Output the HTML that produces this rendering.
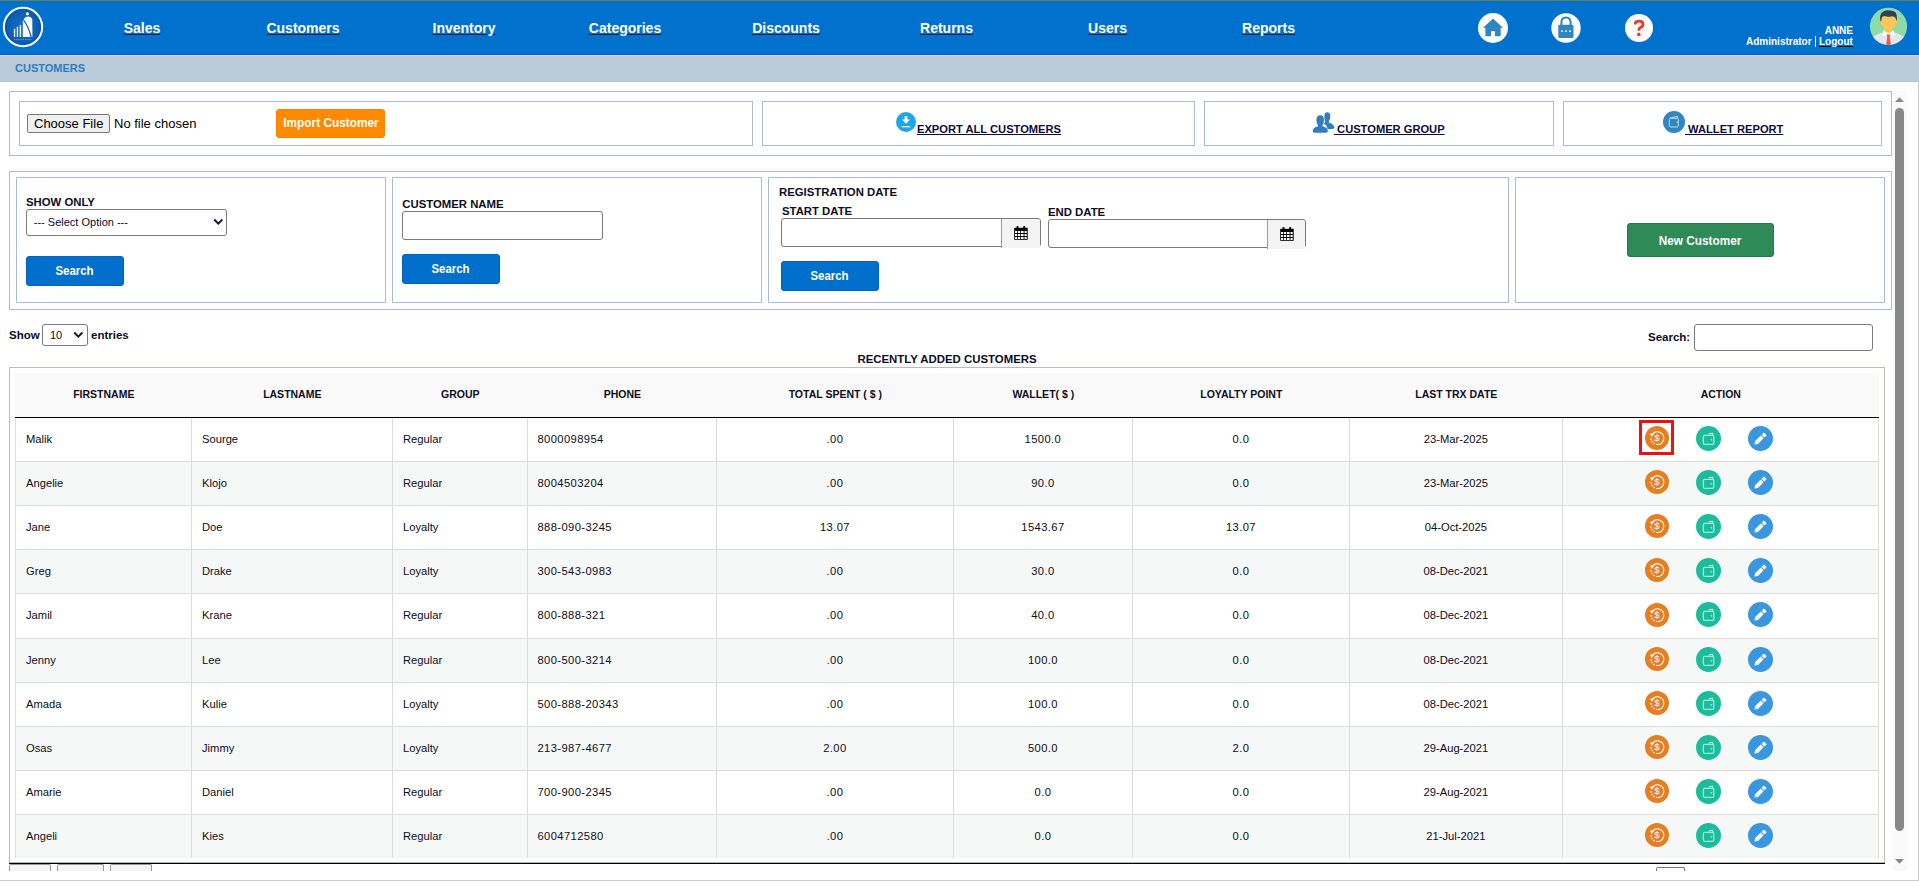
<!DOCTYPE html>
<html><head><meta charset="utf-8">
<style>
*{box-sizing:border-box;margin:0;padding:0}
html,body{width:1919px;height:886px;overflow:hidden;background:#fff;font-family:"Liberation Sans",sans-serif;position:relative}
.a{position:absolute}
.t{position:absolute;white-space:nowrap;line-height:1}
.b{font-weight:bold}
.nav{position:absolute;top:20px;font-size:14px;font-weight:bold;color:#fff;line-height:16px;text-decoration:underline;text-decoration-color:#1b1d3a;text-decoration-thickness:1px;text-underline-offset:1px;transform:translateX(-50%)}
.box{position:absolute;border:1px solid #aabcdc}
.lbl{position:absolute;white-space:nowrap;line-height:1;font-size:11.35px;font-weight:bold;color:#0d0d1f}
.btn{position:absolute;background:#0070cc;border:1px solid #0062c2;border-radius:3px;color:#fff;font-weight:bold;font-size:12.3px;text-align:center}
.btn span{display:inline-block;transform:scaleX(0.93)}
.inp{position:absolute;border:1px solid #7a7a7a;border-radius:3px;background:#fff}
</style></head><body>
<!-- top olive line -->
<div class="a" style="left:0;top:0;width:1919px;height:1px;background:#66804f"></div>
<!-- header -->
<div class="a" style="left:0;top:1px;width:1919px;height:54px;background:#0071cd"></div>
<div class="a" style="left:0;top:55px;width:1919px;height:27px;background:#bccbd9"></div>
<div class="a" style="left:0;top:55px;width:1919px;height:1px;background:#dcd9d6"></div>
<div class="a" style="left:0;top:54px;width:1919px;height:1px;background:#0260c4"></div>
<div class="a" style="left:0;top:81px;width:1919px;height:1px;background:#b3c3d2"></div>

<div class="nav" style="left:142px">Sales</div>
<div class="nav" style="left:303px">Customers</div>
<div class="nav" style="left:464px">Inventory</div>
<div class="nav" style="left:625px">Categories</div>
<div class="nav" style="left:786px">Discounts</div>
<div class="nav" style="left:946.5px">Returns</div>
<div class="nav" style="left:1107.5px">Users</div>
<div class="nav" style="left:1268.5px">Reports</div>


<!-- logo -->
<svg class="a" style="left:2px;top:6px" width="42" height="42" viewBox="0 0 42 42">
<defs><radialGradient id="lg" cx="0.5" cy="0.5" r="0.55"><stop offset="0" stop-color="#1272c9"/><stop offset="0.7" stop-color="#0b5eb2"/><stop offset="1" stop-color="#0a50a0"/></radialGradient></defs>
<circle cx="21" cy="21" r="19.2" fill="url(#lg)" stroke="#fff" stroke-width="2"/>
<circle cx="25.4" cy="7.8" r="1.6" fill="#fff"/>
<path d="M20.8 30.9 L20.8 15.6 L22.3 12.6 Q23.5 10.6 26 10.6 Q29.6 10.8 30.3 13.8 L30.4 30.9 Z" fill="#fff"/>
<path d="M21.6 14.2 Q26.5 20.5 29.3 31.5" fill="none" stroke="#0b5eb2" stroke-width="1.2"/>
<rect x="11.9" y="22.8" width="1.3" height="8.1" fill="#fff"/>
<rect x="14.8" y="20.8" width="1.3" height="10.1" fill="#fff"/>
<rect x="17.7" y="19" width="1.4" height="11.9" fill="#fff"/>
<line x1="12" y1="33.6" x2="30" y2="33.6" stroke="#6d9fd6" stroke-width="1" stroke-dasharray="1.2 1"/>
</svg>

<!-- header icons -->
<svg class="a" style="left:1478px;top:13px" width="30" height="30" viewBox="0 0 30 30">
<circle cx="15" cy="15" r="15" fill="#fff"/>
<path d="M15 5.5 L25 14.7 L22.7 14.7 L22.7 23.3 L17 23.3 L17 18 L13 18 L13 23.3 L7.4 23.3 L7.4 14.7 L5 14.7 Z" fill="#2f86c1"/>
</svg>
<svg class="a" style="left:1551px;top:13px" width="30" height="30" viewBox="0 0 30 30">
<circle cx="15" cy="15" r="14.7" fill="#fff"/>
<path d="M10.4 12.3 L10.4 9.6 Q10.4 4.4 15 4.4 Q19.6 4.4 19.6 9.6 L19.6 12.3" fill="none" stroke="#2f86c1" stroke-width="2"/>
<rect x="7.3" y="11.7" width="15.2" height="13.3" rx="1.6" fill="#2f86c1"/>
<rect x="10" y="17.4" width="1.6" height="1.6" fill="#fff"/>
<rect x="14.1" y="17.4" width="1.6" height="1.6" fill="#fff"/>
<rect x="18.2" y="17.4" width="1.6" height="1.6" fill="#fff"/>
</svg>
<svg class="a" style="left:1625px;top:14px" width="28" height="28" viewBox="0 0 28 28">
<circle cx="14" cy="14" r="14" fill="#fff"/>
<path d="M10.1 10.6 Q10.1 7.1 14.1 7.1 Q18 7.1 18 10.2 Q18 12.3 15.7 13.4 Q13.9 14.1 13.9 15.8 L13.9 16.8" fill="none" stroke="#e43d2b" stroke-width="2.8"/><rect x="12.2" y="18.8" width="3.3" height="3.3" rx="0.9" fill="#e43d2b"/>
</svg>

<div class="t b" style="right:66px;top:25.5px;font-size:10px;color:#fff">ANNE</div>
<div class="t b" style="left:1746px;top:36.5px;font-size:10px;color:#fff">Administrator</div>
<div class="a" style="left:1815px;top:36px;width:1px;height:11px;background:#fff"></div>
<div class="t b" style="left:1819px;top:36.5px;font-size:10px;color:#fff;text-decoration:underline;text-decoration-color:#111;text-underline-offset:1px">Logout</div>

<!-- avatar -->
<svg class="a" style="left:1866px;top:4px" width="46" height="46" viewBox="0 0 46 46">
<defs><clipPath id="avc"><circle cx="22.5" cy="22.3" r="18.6"/></clipPath></defs>
<circle cx="22.5" cy="22.3" r="18.6" fill="#8fdaa6"/>
<g clip-path="url(#avc)">
<path d="M3 46 L5 35 Q9 30.5 17.5 28.3 L27.5 28.3 Q36 30.5 40 35 L42 46 Z" fill="#e5e7ee"/>
<path d="M17 26.5 L17.3 32 L22.5 30.2 L27.7 32 L28 26.5 Z" fill="#ffffff"/>
<path d="M18.6 22 L18.6 27.3 Q22.5 30.5 26.4 27.3 L26.4 22 Z" fill="#f8c653"/>
<path d="M20.3 30.6 L24.7 30.6 L23.8 32.4 L25 42 L20 42 L21.2 32.4 Z" fill="#ef5b4c"/>
<ellipse cx="15.3" cy="17.4" rx="1.7" ry="2.2" fill="#fcc956"/>
<ellipse cx="29.7" cy="17.4" rx="1.7" ry="2.2" fill="#fcc956"/>
<path d="M15.2 12.5 L15.2 17.5 Q15.6 25.2 22.5 25.2 Q29.4 25.2 29.8 17.5 L29.8 12.5 Z" fill="#fcc956"/>
<path d="M14.4 17.2 Q13.2 10.5 16.5 8 Q19.3 5.8 23 6.5 Q27 5.9 29.6 8.6 Q31.6 11.5 30.5 17.4 L29.5 13.8 Q28 11.8 25.8 12.2 Q22.8 13.3 20 12.2 Q17.8 11.8 16.2 13 Q15.3 14.5 15.3 17.4 Z" fill="#2f4257"/>
</g>
</svg>

<div class="t b" style="left:15px;top:62.5px;font-size:11px;color:#2e7bc1">CUSTOMERS</div>

<!-- row 1 boxes -->
<div class="box" style="left:9px;top:91px;width:1883px;height:65px"></div>
<div class="box" style="left:19px;top:101px;width:734px;height:45px"></div>
<div class="box" style="left:762px;top:101px;width:433px;height:45px"></div>
<div class="box" style="left:1204px;top:101px;width:350px;height:45px"></div>
<div class="box" style="left:1563px;top:101px;width:319px;height:45px"></div>

<!-- row 2 boxes -->
<div class="box" style="left:9px;top:171px;width:1883px;height:139px"></div>
<div class="box" style="left:16px;top:177px;width:370px;height:126px"></div>
<div class="box" style="left:392px;top:177px;width:370px;height:126px"></div>
<div class="box" style="left:768px;top:177px;width:741px;height:126px"></div>
<div class="box" style="left:1515px;top:177px;width:370px;height:126px"></div>


<!-- row1 content -->
<div class="a" style="left:27px;top:114px;width:83px;height:19px;background:#efefef;border:1px solid #767676;border-radius:2px"></div>
<div class="t" style="left:34px;top:116.5px;font-size:13px;color:#000">Choose File</div>
<div class="t" style="left:114px;top:116.5px;font-size:13px;color:#000">No file chosen</div>
<div class="a" style="left:276px;top:109px;width:109px;height:29px;background:#ff8a00;border:1px solid #ff8000;border-radius:3px"></div>
<div class="t b" style="left:283.3px;top:117.8px;font-size:11.85px;color:#fff">Import Customer</div>

<svg class="a" style="left:896px;top:112px" width="20" height="20" viewBox="0 0 20 20">
<circle cx="10" cy="10" r="10" fill="#1ea7e8"/>
<path d="M8.6 4.3 L11.4 4.3 L11.4 7.6 L14 7.6 L10 11.8 L6 7.6 L8.6 7.6 Z" fill="#fff"/>
<rect x="5.8" y="14" width="8.4" height="1.3" fill="#fff"/>
</svg>
<div class="t b" style="left:917px;top:123.6px;font-size:11.15px;color:#0c0c3c;text-decoration:underline;text-underline-offset:1px">EXPORT ALL CUSTOMERS</div>

<svg class="a" style="left:1311px;top:110px" width="26" height="24" viewBox="0 0 26 24">
<g fill="#2f7fbf">
<path d="M16.3 2.2 Q19.3 2.2 19.3 6.5 Q19.3 9.5 17.8 11.5 L17.8 12.6 Q22.5 14 23.5 17.5 Q23 19 21 19 L16.5 19 Q15.5 14.5 12.6 13.6 L14.2 11.9 Q13.3 9.5 13.3 6.5 Q13.3 2.2 16.3 2.2 Z"/>
<path d="M9.2 5.2 Q13 5.2 13 10 Q13 13.3 11.4 15.5 L11.4 16.3 Q16.6 17.3 17 21.2 Q16.6 22.8 14 22.8 L4.5 22.8 Q1.7 22.8 1.6 21.2 Q2 17.3 7 16.3 L7 15.5 Q5.4 13.3 5.4 10 Q5.4 5.2 9.2 5.2 Z"/>
</g>
</svg>
<div class="t b" style="left:1334px;top:123.6px;font-size:11.15px;color:#0c0c3c;text-decoration:underline;text-underline-offset:1px">&nbsp;CUSTOMER GROUP</div>

<svg class="a" style="left:1663px;top:111px" width="22" height="22" viewBox="0 0 22 22">
<circle cx="11" cy="11" r="11" fill="#2f86c2"/>
<g fill="none" stroke="#c6dcee" stroke-width="1">
<rect x="6.3" y="7.3" width="9" height="8.7" rx="1.3"/>
<path d="M7.2 7 L14.3 5.3 L14.6 7"/>
</g>
<rect x="13.6" y="10.6" width="1.2" height="1.2" fill="#c6dcee"/>
</svg>
<div class="t b" style="left:1685px;top:123.6px;font-size:11.15px;color:#0c0c3c;text-decoration:underline;text-underline-offset:1px">&nbsp;WALLET REPORT</div>


<!-- row2 content -->
<div class="lbl" style="left:26px;top:197.1px">SHOW ONLY</div>
<div class="inp" style="left:26px;top:209px;width:201px;height:27px"></div>
<div class="t" style="left:33.8px;top:216.5px;font-size:11px;color:#0a0a30">--- Select Option ---</div>
<svg class="a" style="left:213px;top:218px" width="11" height="8" viewBox="0 0 11 8"><path d="M1.2 1.5 L5.3 5.6 L9.4 1.5" fill="none" stroke="#0b1a3f" stroke-width="2"/></svg>
<div class="btn" style="left:26px;top:256px;width:98px;height:30px;line-height:29px"><span>Search</span></div>

<div class="lbl" style="left:402.3px;top:199.1px">CUSTOMER NAME</div>
<div class="inp" style="left:402px;top:211px;width:201px;height:29px"></div>
<div class="btn" style="left:402px;top:254px;width:98px;height:30px;line-height:29px"><span>Search</span></div>

<div class="lbl" style="left:779px;top:186.8px">REGISTRATION DATE</div>
<div class="lbl" style="left:782px;top:205.8px">START DATE</div>
<div class="inp" style="left:781px;top:218px;width:260px;height:29px"></div>
<div class="a" style="left:1001px;top:219px;width:39px;height:29px;background:#f3f3f3;border-left:1px solid #9a9a9a;border-top-right-radius:3px"></div>
<svg class="a" style="left:1014px;top:226.2px" width="14" height="14" viewBox="0 0 14 14">
<rect x="0.2" y="1.8" width="13.5" height="12" fill="#000"/>
<rect x="2.5" y="0" width="2" height="3" rx="0.8" fill="#000"/><rect x="9.2" y="0" width="2" height="3" rx="0.8" fill="#000"/>
<g fill="#fff">
<rect x="1" y="5" width="2.2" height="2"/><rect x="4" y="5" width="2.2" height="2"/><rect x="7" y="5" width="2.6" height="2"/><rect x="10.5" y="5" width="2.2" height="2"/>
<rect x="1" y="8" width="2.2" height="2"/><rect x="4" y="8" width="2.2" height="2"/><rect x="7" y="8" width="2.6" height="2"/><rect x="10.5" y="8" width="2.2" height="2"/>
<rect x="1" y="11" width="2.2" height="2"/><rect x="4" y="11" width="2.2" height="2"/><rect x="7" y="11" width="2.6" height="2"/><rect x="10.5" y="11" width="2.2" height="2"/>
</g></svg>
<div class="lbl" style="left:1048px;top:207.1px">END DATE</div>
<div class="inp" style="left:1048px;top:219px;width:258px;height:29px"></div>
<div class="a" style="left:1267px;top:220px;width:38px;height:29px;background:#f3f3f3;border-left:1px solid #9a9a9a;border-top-right-radius:3px"></div>
<svg class="a" style="left:1280px;top:227.0px" width="14" height="14" viewBox="0 0 14 14">
<rect x="0.2" y="1.8" width="13.5" height="12" fill="#000"/>
<rect x="2.5" y="0" width="2" height="3" rx="0.8" fill="#000"/><rect x="9.2" y="0" width="2" height="3" rx="0.8" fill="#000"/>
<g fill="#fff">
<rect x="1" y="5" width="2.2" height="2"/><rect x="4" y="5" width="2.2" height="2"/><rect x="7" y="5" width="2.6" height="2"/><rect x="10.5" y="5" width="2.2" height="2"/>
<rect x="1" y="8" width="2.2" height="2"/><rect x="4" y="8" width="2.2" height="2"/><rect x="7" y="8" width="2.6" height="2"/><rect x="10.5" y="8" width="2.2" height="2"/>
<rect x="1" y="11" width="2.2" height="2"/><rect x="4" y="11" width="2.2" height="2"/><rect x="7" y="11" width="2.6" height="2"/><rect x="10.5" y="11" width="2.2" height="2"/>
</g></svg>
<div class="btn" style="left:781px;top:261px;width:98px;height:30px;line-height:29px"><span>Search</span></div>

<div class="btn" style="left:1627px;top:223px;width:147px;height:34px;line-height:35px;background:#2e8a56;border:1px solid #1f7d47;font-size:12.3px"><span style="transform:scaleX(0.96)">New Customer</span></div>

<svg width="0" height="0" style="position:absolute"><defs>
<g id="ic-ref"><circle cx="12" cy="12" r="12" fill="#e67e22"/>
<path d="M7.6 8.2 A6.3 6.3 0 1 1 11.2 18.3" fill="none" stroke="#fff" stroke-width="1.2"/>
<path d="M5.2 7.6 L9.4 7.4 L6.6 11 Z" fill="#fff"/>
<rect x="5.3" y="12.2" width="1.4" height="1.4" fill="#fff"/><rect x="6.4" y="14.8" width="1.4" height="1.4" fill="#fff"/><rect x="8.3" y="16.8" width="1.4" height="1.4" fill="#fff"/>
<text x="12" y="15.3" font-family="Liberation Sans" font-size="9.5" fill="#fff" text-anchor="middle">$</text>
</g>
<g id="ic-wal"><circle cx="12.5" cy="12.5" r="12.5" fill="#1bbc9b"/>
<rect x="7.4" y="9.4" width="10.4" height="9" rx="1.3" fill="none" stroke="#a6e6d6" stroke-width="1.3"/>
<path d="M12.6 7.9 L16.6 7.3 L17 9" fill="none" stroke="#a6e6d6" stroke-width="1.2"/>
<circle cx="15.4" cy="13.8" r="0.8" fill="#e8faf5"/>
</g>
<g id="ic-pen"><circle cx="12.5" cy="12.5" r="12.5" fill="#3a97dd"/>
<path d="M6.4 18.6 L7.2 15.1 L12.8 9.5 L15.6 12.3 L10 17.9 Z" fill="#fff"/>
<path d="M13.5 8.8 L15.9 6.4 L18.7 9.2 L16.3 11.6 Z" fill="#fff"/>
</g>
</defs></svg>
<!-- table controls -->
<div class="t b" style="left:9px;top:329.6px;font-size:11.5px;color:#0d0d1f">Show</div>
<div class="inp" style="left:42px;top:324px;width:46px;height:22px;border-radius:3px"></div>
<div class="t" style="left:50px;top:329.7px;font-size:11px;color:#0a0a30">10</div>
<svg class="a" style="left:73px;top:331px" width="11" height="8" viewBox="0 0 11 8"><path d="M1.2 1.5 L5.3 5.6 L9.4 1.5" fill="none" stroke="#0b1a3f" stroke-width="2"/></svg>
<div class="t b" style="left:91px;top:329.6px;font-size:11.5px;color:#0d0d1f">entries</div>
<div class="t b" style="left:1648px;top:332.2px;font-size:11.5px;color:#0d0d1f">Search:</div>
<div class="inp" style="left:1694px;top:324px;width:179px;height:27px"></div>
<div class="t b" style="left:947px;top:354.4px;font-size:11.4px;color:#0d0d1f;transform:translateX(-50%)">RECENTLY ADDED CUSTOMERS</div>
<div class="a" style="left:9px;top:367px;width:1876px;height:496px;border:1px solid #bdbdb6;border-bottom:none"></div>
<div class="a" style="left:15px;top:373px;width:1864px;height:44px;background:#f9f9f9"></div>
<div class="a" style="left:15px;top:417px;width:1864px;height:1px;background:#000"></div>
<div class="a" style="left:9px;top:862px;width:1876px;height:1px;background:#b4b4b4"></div><div class="a" style="left:9px;top:863px;width:1876px;height:1px;background:#000"></div>
<div class="t b" style="left:103.8px;top:388.6px;font-size:10.5px;color:#0d0d1f;transform:translateX(-50%)">FIRSTNAME</div>
<div class="t b" style="left:292.3px;top:388.6px;font-size:10.5px;color:#0d0d1f;transform:translateX(-50%)">LASTNAME</div>
<div class="t b" style="left:460.3px;top:388.6px;font-size:10.5px;color:#0d0d1f;transform:translateX(-50%)">GROUP</div>
<div class="t b" style="left:622.3px;top:388.6px;font-size:10.5px;color:#0d0d1f;transform:translateX(-50%)">PHONE</div>
<div class="t b" style="left:835.3px;top:388.6px;font-size:10.5px;color:#0d0d1f;transform:translateX(-50%)">TOTAL SPENT ( $ )</div>
<div class="t b" style="left:1043.3px;top:388.6px;font-size:10.5px;color:#0d0d1f;transform:translateX(-50%)">WALLET( $ )</div>
<div class="t b" style="left:1241.3px;top:388.6px;font-size:10.5px;color:#0d0d1f;transform:translateX(-50%)">LOYALTY POINT</div>
<div class="t b" style="left:1456.3px;top:388.6px;font-size:10.5px;color:#0d0d1f;transform:translateX(-50%)">LAST TRX DATE</div>
<div class="t b" style="left:1720.8px;top:388.6px;font-size:10.5px;color:#0d0d1f;transform:translateX(-50%)">ACTION</div>
<div class="a" style="left:15px;top:462px;width:1864px;height:43px;background:#f6f8f8"></div>
<div class="a" style="left:15px;top:461px;width:1864px;height:1px;background:#dcdcdc"></div>
<div class="a" style="left:15px;top:505px;width:1864px;height:1px;background:#dcdcdc"></div>
<div class="a" style="left:15px;top:550px;width:1864px;height:43px;background:#f6f8f8"></div>
<div class="a" style="left:15px;top:549px;width:1864px;height:1px;background:#dcdcdc"></div>
<div class="a" style="left:15px;top:593px;width:1864px;height:1px;background:#dcdcdc"></div>
<div class="a" style="left:15px;top:639px;width:1864px;height:43px;background:#f6f8f8"></div>
<div class="a" style="left:15px;top:638px;width:1864px;height:1px;background:#dcdcdc"></div>
<div class="a" style="left:15px;top:682px;width:1864px;height:1px;background:#dcdcdc"></div>
<div class="a" style="left:15px;top:727px;width:1864px;height:43px;background:#f6f8f8"></div>
<div class="a" style="left:15px;top:726px;width:1864px;height:1px;background:#dcdcdc"></div>
<div class="a" style="left:15px;top:770px;width:1864px;height:1px;background:#dcdcdc"></div>
<div class="a" style="left:15px;top:815px;width:1864px;height:43px;background:#f6f8f8"></div>
<div class="a" style="left:15px;top:814px;width:1864px;height:1px;background:#dcdcdc"></div>
<div class="a" style="left:15px;top:418px;width:1px;height:440px;background:#dcdcdc"></div>
<div class="a" style="left:191px;top:418px;width:1px;height:440px;background:#dcdcdc"></div>
<div class="a" style="left:392px;top:418px;width:1px;height:440px;background:#dcdcdc"></div>
<div class="a" style="left:527px;top:418px;width:1px;height:440px;background:#dcdcdc"></div>
<div class="a" style="left:716px;top:418px;width:1px;height:440px;background:#dcdcdc"></div>
<div class="a" style="left:953px;top:418px;width:1px;height:440px;background:#dcdcdc"></div>
<div class="a" style="left:1132px;top:418px;width:1px;height:440px;background:#dcdcdc"></div>
<div class="a" style="left:1349px;top:418px;width:1px;height:440px;background:#dcdcdc"></div>
<div class="a" style="left:1562px;top:418px;width:1px;height:440px;background:#dcdcdc"></div>
<div class="a" style="left:1878px;top:418px;width:1px;height:440px;background:#dcdcdc"></div>
<div class="t" style="left:26px;top:433.7px;font-size:11.2px;color:#0c0c20">Malik</div>
<div class="t" style="left:202px;top:433.7px;font-size:11.2px;color:#0c0c20">Sourge</div>
<div class="t" style="left:403px;top:433.7px;font-size:11.2px;color:#0c0c20">Regular</div>
<div class="t" style="left:537.5px;top:433.7px;font-size:11.2px;color:#0c0c20;letter-spacing:0.4px">8000098954</div>
<div class="t" style="left:834.9px;top:433.7px;font-size:11.2px;color:#0c0c20;letter-spacing:0.4px;transform:translateX(-50%)">.00</div>
<div class="t" style="left:1042.9px;top:433.7px;font-size:11.2px;color:#0c0c20;letter-spacing:0.4px;transform:translateX(-50%)">1500.0</div>
<div class="t" style="left:1240.9px;top:433.7px;font-size:11.2px;color:#0c0c20;letter-spacing:0.4px;transform:translateX(-50%)">0.0</div>
<div class="t" style="left:1455.9px;top:433.7px;font-size:11.2px;color:#0c0c20;transform:translateX(-50%)">23-Mar-2025</div>
<svg class="a" style="left:1645px;top:426.2px" width="24" height="24" viewBox="0 0 24 24"><use href="#ic-ref"/></svg>
<svg class="a" style="left:1696px;top:425.7px" width="25" height="25" viewBox="0 0 25 25"><use href="#ic-wal"/></svg>
<svg class="a" style="left:1748px;top:425.7px" width="25" height="25" viewBox="0 0 25 25"><use href="#ic-pen"/></svg>
<div class="t" style="left:26px;top:477.7px;font-size:11.2px;color:#0c0c20">Angelie</div>
<div class="t" style="left:202px;top:477.7px;font-size:11.2px;color:#0c0c20">Klojo</div>
<div class="t" style="left:403px;top:477.7px;font-size:11.2px;color:#0c0c20">Regular</div>
<div class="t" style="left:537.5px;top:477.7px;font-size:11.2px;color:#0c0c20;letter-spacing:0.4px">8004503204</div>
<div class="t" style="left:834.9px;top:477.7px;font-size:11.2px;color:#0c0c20;letter-spacing:0.4px;transform:translateX(-50%)">.00</div>
<div class="t" style="left:1042.9px;top:477.7px;font-size:11.2px;color:#0c0c20;letter-spacing:0.4px;transform:translateX(-50%)">90.0</div>
<div class="t" style="left:1240.9px;top:477.7px;font-size:11.2px;color:#0c0c20;letter-spacing:0.4px;transform:translateX(-50%)">0.0</div>
<div class="t" style="left:1455.9px;top:477.7px;font-size:11.2px;color:#0c0c20;transform:translateX(-50%)">23-Mar-2025</div>
<svg class="a" style="left:1645px;top:470.2px" width="24" height="24" viewBox="0 0 24 24"><use href="#ic-ref"/></svg>
<svg class="a" style="left:1696px;top:469.7px" width="25" height="25" viewBox="0 0 25 25"><use href="#ic-wal"/></svg>
<svg class="a" style="left:1748px;top:469.7px" width="25" height="25" viewBox="0 0 25 25"><use href="#ic-pen"/></svg>
<div class="t" style="left:26px;top:521.7px;font-size:11.2px;color:#0c0c20">Jane</div>
<div class="t" style="left:202px;top:521.7px;font-size:11.2px;color:#0c0c20">Doe</div>
<div class="t" style="left:403px;top:521.7px;font-size:11.2px;color:#0c0c20">Loyalty</div>
<div class="t" style="left:537.5px;top:521.7px;font-size:11.2px;color:#0c0c20;letter-spacing:0.4px">888-090-3245</div>
<div class="t" style="left:834.9px;top:521.7px;font-size:11.2px;color:#0c0c20;letter-spacing:0.4px;transform:translateX(-50%)">13.07</div>
<div class="t" style="left:1042.9px;top:521.7px;font-size:11.2px;color:#0c0c20;letter-spacing:0.4px;transform:translateX(-50%)">1543.67</div>
<div class="t" style="left:1240.9px;top:521.7px;font-size:11.2px;color:#0c0c20;letter-spacing:0.4px;transform:translateX(-50%)">13.07</div>
<div class="t" style="left:1455.9px;top:521.7px;font-size:11.2px;color:#0c0c20;transform:translateX(-50%)">04-Oct-2025</div>
<svg class="a" style="left:1645px;top:514.2px" width="24" height="24" viewBox="0 0 24 24"><use href="#ic-ref"/></svg>
<svg class="a" style="left:1696px;top:513.7px" width="25" height="25" viewBox="0 0 25 25"><use href="#ic-wal"/></svg>
<svg class="a" style="left:1748px;top:513.7px" width="25" height="25" viewBox="0 0 25 25"><use href="#ic-pen"/></svg>
<div class="t" style="left:26px;top:565.7px;font-size:11.2px;color:#0c0c20">Greg</div>
<div class="t" style="left:202px;top:565.7px;font-size:11.2px;color:#0c0c20">Drake</div>
<div class="t" style="left:403px;top:565.7px;font-size:11.2px;color:#0c0c20">Loyalty</div>
<div class="t" style="left:537.5px;top:565.7px;font-size:11.2px;color:#0c0c20;letter-spacing:0.4px">300-543-0983</div>
<div class="t" style="left:834.9px;top:565.7px;font-size:11.2px;color:#0c0c20;letter-spacing:0.4px;transform:translateX(-50%)">.00</div>
<div class="t" style="left:1042.9px;top:565.7px;font-size:11.2px;color:#0c0c20;letter-spacing:0.4px;transform:translateX(-50%)">30.0</div>
<div class="t" style="left:1240.9px;top:565.7px;font-size:11.2px;color:#0c0c20;letter-spacing:0.4px;transform:translateX(-50%)">0.0</div>
<div class="t" style="left:1455.9px;top:565.7px;font-size:11.2px;color:#0c0c20;transform:translateX(-50%)">08-Dec-2021</div>
<svg class="a" style="left:1645px;top:558.2px" width="24" height="24" viewBox="0 0 24 24"><use href="#ic-ref"/></svg>
<svg class="a" style="left:1696px;top:557.7px" width="25" height="25" viewBox="0 0 25 25"><use href="#ic-wal"/></svg>
<svg class="a" style="left:1748px;top:557.7px" width="25" height="25" viewBox="0 0 25 25"><use href="#ic-pen"/></svg>
<div class="t" style="left:26px;top:610.2px;font-size:11.2px;color:#0c0c20">Jamil</div>
<div class="t" style="left:202px;top:610.2px;font-size:11.2px;color:#0c0c20">Krane</div>
<div class="t" style="left:403px;top:610.2px;font-size:11.2px;color:#0c0c20">Regular</div>
<div class="t" style="left:537.5px;top:610.2px;font-size:11.2px;color:#0c0c20;letter-spacing:0.4px">800-888-321</div>
<div class="t" style="left:834.9px;top:610.2px;font-size:11.2px;color:#0c0c20;letter-spacing:0.4px;transform:translateX(-50%)">.00</div>
<div class="t" style="left:1042.9px;top:610.2px;font-size:11.2px;color:#0c0c20;letter-spacing:0.4px;transform:translateX(-50%)">40.0</div>
<div class="t" style="left:1240.9px;top:610.2px;font-size:11.2px;color:#0c0c20;letter-spacing:0.4px;transform:translateX(-50%)">0.0</div>
<div class="t" style="left:1455.9px;top:610.2px;font-size:11.2px;color:#0c0c20;transform:translateX(-50%)">08-Dec-2021</div>
<svg class="a" style="left:1645px;top:602.7px" width="24" height="24" viewBox="0 0 24 24"><use href="#ic-ref"/></svg>
<svg class="a" style="left:1696px;top:602.2px" width="25" height="25" viewBox="0 0 25 25"><use href="#ic-wal"/></svg>
<svg class="a" style="left:1748px;top:602.2px" width="25" height="25" viewBox="0 0 25 25"><use href="#ic-pen"/></svg>
<div class="t" style="left:26px;top:654.7px;font-size:11.2px;color:#0c0c20">Jenny</div>
<div class="t" style="left:202px;top:654.7px;font-size:11.2px;color:#0c0c20">Lee</div>
<div class="t" style="left:403px;top:654.7px;font-size:11.2px;color:#0c0c20">Regular</div>
<div class="t" style="left:537.5px;top:654.7px;font-size:11.2px;color:#0c0c20;letter-spacing:0.4px">800-500-3214</div>
<div class="t" style="left:834.9px;top:654.7px;font-size:11.2px;color:#0c0c20;letter-spacing:0.4px;transform:translateX(-50%)">.00</div>
<div class="t" style="left:1042.9px;top:654.7px;font-size:11.2px;color:#0c0c20;letter-spacing:0.4px;transform:translateX(-50%)">100.0</div>
<div class="t" style="left:1240.9px;top:654.7px;font-size:11.2px;color:#0c0c20;letter-spacing:0.4px;transform:translateX(-50%)">0.0</div>
<div class="t" style="left:1455.9px;top:654.7px;font-size:11.2px;color:#0c0c20;transform:translateX(-50%)">08-Dec-2021</div>
<svg class="a" style="left:1645px;top:647.2px" width="24" height="24" viewBox="0 0 24 24"><use href="#ic-ref"/></svg>
<svg class="a" style="left:1696px;top:646.7px" width="25" height="25" viewBox="0 0 25 25"><use href="#ic-wal"/></svg>
<svg class="a" style="left:1748px;top:646.7px" width="25" height="25" viewBox="0 0 25 25"><use href="#ic-pen"/></svg>
<div class="t" style="left:26px;top:698.7px;font-size:11.2px;color:#0c0c20">Amada</div>
<div class="t" style="left:202px;top:698.7px;font-size:11.2px;color:#0c0c20">Kulie</div>
<div class="t" style="left:403px;top:698.7px;font-size:11.2px;color:#0c0c20">Loyalty</div>
<div class="t" style="left:537.5px;top:698.7px;font-size:11.2px;color:#0c0c20;letter-spacing:0.4px">500-888-20343</div>
<div class="t" style="left:834.9px;top:698.7px;font-size:11.2px;color:#0c0c20;letter-spacing:0.4px;transform:translateX(-50%)">.00</div>
<div class="t" style="left:1042.9px;top:698.7px;font-size:11.2px;color:#0c0c20;letter-spacing:0.4px;transform:translateX(-50%)">100.0</div>
<div class="t" style="left:1240.9px;top:698.7px;font-size:11.2px;color:#0c0c20;letter-spacing:0.4px;transform:translateX(-50%)">0.0</div>
<div class="t" style="left:1455.9px;top:698.7px;font-size:11.2px;color:#0c0c20;transform:translateX(-50%)">08-Dec-2021</div>
<svg class="a" style="left:1645px;top:691.2px" width="24" height="24" viewBox="0 0 24 24"><use href="#ic-ref"/></svg>
<svg class="a" style="left:1696px;top:690.7px" width="25" height="25" viewBox="0 0 25 25"><use href="#ic-wal"/></svg>
<svg class="a" style="left:1748px;top:690.7px" width="25" height="25" viewBox="0 0 25 25"><use href="#ic-pen"/></svg>
<div class="t" style="left:26px;top:742.7px;font-size:11.2px;color:#0c0c20">Osas</div>
<div class="t" style="left:202px;top:742.7px;font-size:11.2px;color:#0c0c20">Jimmy</div>
<div class="t" style="left:403px;top:742.7px;font-size:11.2px;color:#0c0c20">Loyalty</div>
<div class="t" style="left:537.5px;top:742.7px;font-size:11.2px;color:#0c0c20;letter-spacing:0.4px">213-987-4677</div>
<div class="t" style="left:834.9px;top:742.7px;font-size:11.2px;color:#0c0c20;letter-spacing:0.4px;transform:translateX(-50%)">2.00</div>
<div class="t" style="left:1042.9px;top:742.7px;font-size:11.2px;color:#0c0c20;letter-spacing:0.4px;transform:translateX(-50%)">500.0</div>
<div class="t" style="left:1240.9px;top:742.7px;font-size:11.2px;color:#0c0c20;letter-spacing:0.4px;transform:translateX(-50%)">2.0</div>
<div class="t" style="left:1455.9px;top:742.7px;font-size:11.2px;color:#0c0c20;transform:translateX(-50%)">29-Aug-2021</div>
<svg class="a" style="left:1645px;top:735.2px" width="24" height="24" viewBox="0 0 24 24"><use href="#ic-ref"/></svg>
<svg class="a" style="left:1696px;top:734.7px" width="25" height="25" viewBox="0 0 25 25"><use href="#ic-wal"/></svg>
<svg class="a" style="left:1748px;top:734.7px" width="25" height="25" viewBox="0 0 25 25"><use href="#ic-pen"/></svg>
<div class="t" style="left:26px;top:786.7px;font-size:11.2px;color:#0c0c20">Amarie</div>
<div class="t" style="left:202px;top:786.7px;font-size:11.2px;color:#0c0c20">Daniel</div>
<div class="t" style="left:403px;top:786.7px;font-size:11.2px;color:#0c0c20">Regular</div>
<div class="t" style="left:537.5px;top:786.7px;font-size:11.2px;color:#0c0c20;letter-spacing:0.4px">700-900-2345</div>
<div class="t" style="left:834.9px;top:786.7px;font-size:11.2px;color:#0c0c20;letter-spacing:0.4px;transform:translateX(-50%)">.00</div>
<div class="t" style="left:1042.9px;top:786.7px;font-size:11.2px;color:#0c0c20;letter-spacing:0.4px;transform:translateX(-50%)">0.0</div>
<div class="t" style="left:1240.9px;top:786.7px;font-size:11.2px;color:#0c0c20;letter-spacing:0.4px;transform:translateX(-50%)">0.0</div>
<div class="t" style="left:1455.9px;top:786.7px;font-size:11.2px;color:#0c0c20;transform:translateX(-50%)">29-Aug-2021</div>
<svg class="a" style="left:1645px;top:779.2px" width="24" height="24" viewBox="0 0 24 24"><use href="#ic-ref"/></svg>
<svg class="a" style="left:1696px;top:778.7px" width="25" height="25" viewBox="0 0 25 25"><use href="#ic-wal"/></svg>
<svg class="a" style="left:1748px;top:778.7px" width="25" height="25" viewBox="0 0 25 25"><use href="#ic-pen"/></svg>
<div class="t" style="left:26px;top:830.7px;font-size:11.2px;color:#0c0c20">Angeli</div>
<div class="t" style="left:202px;top:830.7px;font-size:11.2px;color:#0c0c20">Kies</div>
<div class="t" style="left:403px;top:830.7px;font-size:11.2px;color:#0c0c20">Regular</div>
<div class="t" style="left:537.5px;top:830.7px;font-size:11.2px;color:#0c0c20;letter-spacing:0.4px">6004712580</div>
<div class="t" style="left:834.9px;top:830.7px;font-size:11.2px;color:#0c0c20;letter-spacing:0.4px;transform:translateX(-50%)">.00</div>
<div class="t" style="left:1042.9px;top:830.7px;font-size:11.2px;color:#0c0c20;letter-spacing:0.4px;transform:translateX(-50%)">0.0</div>
<div class="t" style="left:1240.9px;top:830.7px;font-size:11.2px;color:#0c0c20;letter-spacing:0.4px;transform:translateX(-50%)">0.0</div>
<div class="t" style="left:1455.9px;top:830.7px;font-size:11.2px;color:#0c0c20;transform:translateX(-50%)">21-Jul-2021</div>
<svg class="a" style="left:1645px;top:823.2px" width="24" height="24" viewBox="0 0 24 24"><use href="#ic-ref"/></svg>
<svg class="a" style="left:1696px;top:822.7px" width="25" height="25" viewBox="0 0 25 25"><use href="#ic-wal"/></svg>
<svg class="a" style="left:1748px;top:822.7px" width="25" height="25" viewBox="0 0 25 25"><use href="#ic-pen"/></svg>
<div class="a" style="left:1639px;top:420px;width:35px;height:35px;border:3px solid #ee1111"></div>
<div class="a" style="left:9px;top:864px;width:42px;height:8px;border:1px solid #999;border-bottom:none;background:#f4f4f4;border-radius:2px 2px 0 0"></div>
<div class="a" style="left:57px;top:864px;width:47px;height:8px;border:1px solid #999;border-bottom:none;background:#f4f4f4;border-radius:2px 2px 0 0"></div>
<div class="a" style="left:110px;top:864px;width:42px;height:8px;border:1px solid #999;border-bottom:none;background:#f4f4f4;border-radius:2px 2px 0 0"></div>
<div class="a" style="left:1656px;top:867px;width:29px;height:5px;border:1px solid #777;border-bottom:none;border-radius:2px 2px 0 0"></div>
<div class="a" style="left:0;top:871px;width:1919px;height:15px;background:#fff"></div>
<div class="a" style="left:0;top:880px;width:1919px;height:1px;background:#cdcdcd"></div>
<div class="a" style="left:1918px;top:81px;width:1px;height:800px;background:#cdcdcd"></div>
<div class="a" style="left:1893px;top:91px;width:14px;height:780px;background:#fafafa"></div>
<svg class="a" style="left:1893px;top:96px" width="14" height="7" viewBox="0 0 14 7"><path d="M2 6 L6.5 1.2 L11 6 Z" fill="#878787"/></svg>
<div class="a" style="left:1895px;top:108px;width:9px;height:723px;background:#888;border-radius:4.5px"></div>
<svg class="a" style="left:1893px;top:858px" width="14" height="7" viewBox="0 0 14 7"><path d="M2 1 L6.5 5.8 L11 1 Z" fill="#878787"/></svg>
</body></html>
